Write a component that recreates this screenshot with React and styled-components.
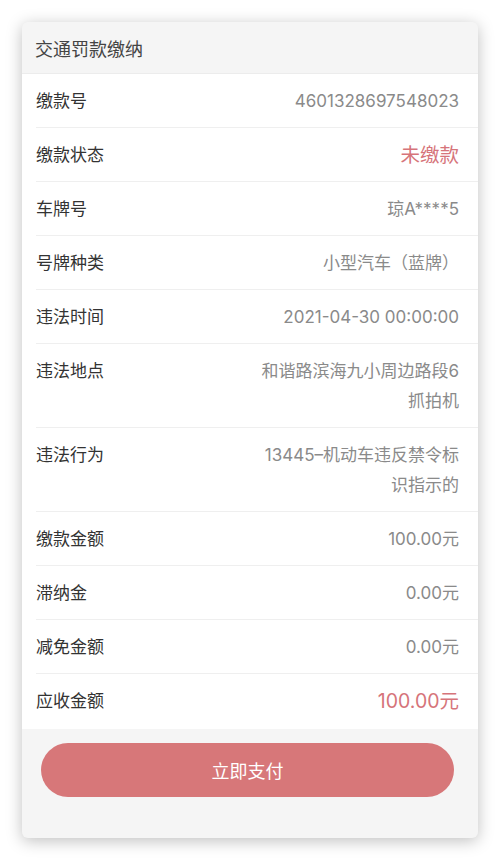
import styled, { createGlobalStyle } from 'styled-components'

const Global = createGlobalStyle`
  html, body {
    margin: 0;
    padding: 0;
    background: #fff;
  }
  body {
    font-family: Inter, "Noto Sans CJK SC", sans-serif;
    -webkit-font-smoothing: antialiased;
  }
`

const Page = styled.div`
  padding: 22px 22px 23px 22px;
`

const Card = styled.div`
  background: #f5f5f5;
  border-radius: 6px;
  overflow: hidden;
  box-shadow: 0 3px 16px rgba(0, 0, 0, 0.25);
`

const Header = styled.div`
  height: 51px;
  display: flex;
  align-items: center;
  padding-left: 13px;
  font-size: 18px;
  color: #444;
  border-bottom: 1px solid #ececec;
`

const List = styled.div`
  background: #fff;
`

const Row = styled.div`
  display: flex;
  justify-content: space-between;
  align-items: flex-start;
  margin-left: 14px;
  padding: 12px 19px 11px 0;
  line-height: 30px;
  border-bottom: 1px solid #efefef;

  &:last-child {
    padding-bottom: 12px;
    border-bottom-color: #fff;
  }
`

const Label = styled.span`
  font-size: 17px;
  color: #333;
  white-space: nowrap;
`

const Value = styled.span`
  max-width: 205px;
  text-align: right;
  font-size: ${(p) => (p.$hot ? '19.5px' : '17px')};
  color: ${(p) => (p.$hot ? '#d6747a' : '#8a8a8a')};
  word-break: break-all;
`

const Footer = styled.div`
  padding: 14px 24px 41px 19px;
`

const PayButton = styled.button`
  display: block;
  width: 100%;
  height: 54px;
  border: none;
  border-radius: 27px;
  background: #d77779;
  color: #fff;
  font-family: inherit;
  font-size: 18px;
  cursor: pointer;
`

const rows = [
  { label: '缴款号', value: '4601328697548023' },
  { label: '缴款状态', value: '未缴款', hot: true },
  { label: '车牌号', value: '琼A****5' },
  { label: '号牌种类', value: '小型汽车（蓝牌）' },
  { label: '违法时间', value: '2021-04-30 00:00:00' },
  { label: '违法地点', value: '和谐路滨海九小周边路段6抓拍机' },
  { label: '违法行为', value: '13445–机动车违反禁令标识指示的' },
  { label: '缴款金额', value: '100.00元' },
  { label: '滞纳金', value: '0.00元' },
  { label: '减免金额', value: '0.00元' },
  { label: '应收金额', value: '100.00元', hot: true },
]

export default function App() {
  return (
    <Page>
      <Global />
      <Card>
        <Header>交通罚款缴纳</Header>
        <List>
          {rows.map((r) => (
            <Row key={r.label}>
              <Label>{r.label}</Label>
              <Value $hot={r.hot}>{r.value}</Value>
            </Row>
          ))}
        </List>
        <Footer>
          <PayButton>立即支付</PayButton>
        </Footer>
      </Card>
    </Page>
  )
}
